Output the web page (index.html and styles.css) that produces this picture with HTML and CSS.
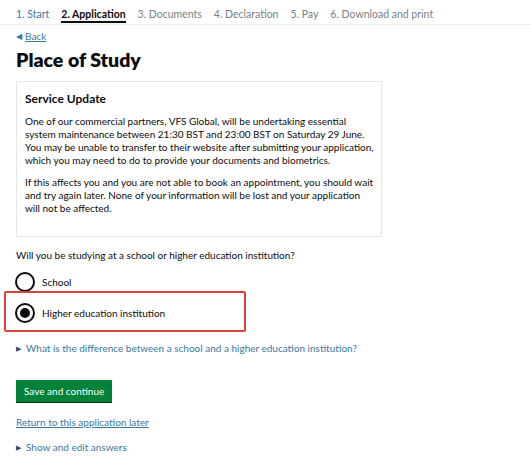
FILE: index.html
```html
<!DOCTYPE html>
<html lang="en">

<head>
    <meta charset="UTF-8">
    <meta name="viewport" content="width=device-width, initial-scale=1.0">
    <title>Place of Study</title>
    <link rel="stylesheet" href="styles.css">
</head>

<body>
    <nav class="steps">
        <ul>
            <li class="done">1. Start</li>
            <li class="current">2. Application</li>
            <li>3. Documents</li>
            <li>4. Declaration</li>
            <li>5. Pay</li>
            <li>6. Download and print</li>
        </ul>
    </nav>

    <div class="container">
        <a class="back" href="#"><span class="arrow">&#9664;</span><span class="back-text">Back</span></a>
        <h1>Place of Study</h1>

        <div class="notice">
            <h2>Service Update</h2>
            <p>One of our commercial partners, VFS Global, will be undertaking essential<br>
                system maintenance between 21:30 BST and 23:00 BST on Saturday 29 June.
                You may be unable to transfer to their website after submitting your application,
                which you may need to do to provide your documents and biometrics.</p>
            <p>If this affects you and you are not able to book an appointment, you should wait
                and try again later. None of your information will be lost and your application<br>
                will not be affected.</p>
        </div>

        <p class="question">Will you be studying at a school or higher education institution?</p>
        <div class="radios">
            <label class="radio"><span class="circle"></span>School</label>
            <label class="radio checked"><span class="circle"></span>Higher education institution</label>
        </div>

        <p class="details"><span class="tri">&#9654;</span>What is the difference between a school and a higher education institution?</p>

        <button class="save">Save and continue</button>

        <a class="later" href="#">Return to this application later</a>
        <p class="details show"><span class="tri">&#9654;</span>Show and edit answers</p>
    </div>
</body>

</html>
```

FILE: styles.css
```css
body {
    font-family: Lato, 'Noto Sans', sans-serif;
    font-size: 10px;
    margin: 0;
    padding: 0;
    background: #fff;
    color: #0b0c0c;
}

.steps {
    border-bottom: 1px solid #ececec;
    padding: 0 16px 1px;
    font-size: 10.5px;
}

.steps ul {
    list-style: none;
    margin: 0;
    padding: 0;
    display: flex;
    gap: 12px;
}

.steps li {
    color: #7a7f83;
    padding-top: 7px;
    line-height: 14px;
    border-bottom: 2px solid transparent;
}

.steps li.done {
    color: #3a77a3;
}

.steps li.current {
    color: #0b0c0c;
    font-weight: bold;
    border-bottom-color: #0b0c0c;
}

.container {
    padding: 0 16px;
}

.back {
    display: inline-flex;
    align-items: center;
    margin-top: 4px;
    color: #3a77a3;
    text-decoration: none;
    line-height: 14px;
}

.back .arrow {
    font-size: 8px;
    margin-right: 3px;
}

.back-text {
    text-decoration: underline;
}

h1 {
    font-size: 19.5px;
    font-weight: 800;
    margin: 5px 0 9px;
    line-height: 24px;
}

.notice {
    border: 1px solid #e6e6e6;
    width: 355px;
    padding: 8px 1px 21px 8px;
}

.notice h2 {
    font-size: 12px;
    font-weight: bold;
    margin: 0 0 8px;
    line-height: 17px;
}

.notice p {
    margin: 0 0 9px;
    line-height: 13px;
}

.notice p:last-child {
    margin-bottom: 0;
}

.question {
    margin: 12px 0 10px;
    line-height: 13px;
}

.radios {
    display: flex;
    flex-direction: column;
    gap: 11px;
}

.radio {
    display: flex;
    align-items: center;
    gap: 7px;
    line-height: 20px;
    position: relative;
}

.circle {
    width: 16px;
    height: 16px;
    border: 2px solid #0b0c0c;
    border-radius: 50%;
    margin-left: -1px;
    display: flex;
    align-items: center;
    justify-content: center;
}

.checked .circle::after {
    content: "";
    width: 10px;
    height: 10px;
    border-radius: 50%;
    background: #0b0c0c;
}

/* red highlight drawn over the chosen answer */
.checked::before {
    content: "";
    position: absolute;
    left: -12px;
    top: -12px;
    width: 238px;
    height: 37px;
    border: 2px solid #d9433b;
    border-radius: 2px;
}

.details {
    color: #3a77a3;
    margin: 19px 0 0;
    line-height: 13px;
}

.details .tri {
    font-size: 7px;
    margin-right: 5px;
    color: #2a4a66;
    vertical-align: 1px;
}

.details.show {
    margin-top: 12px;
}

.save {
    display: block;
    margin-top: 25px;
    background: #00823b;
    color: #fff;
    font-family: inherit;
    font-size: 10px;
    border: none;
    box-shadow: 0 1px 0 #003618;
    padding: 5px 8px;
    line-height: 12px;
    cursor: pointer;
}

.later {
    display: inline-block;
    margin-top: 14px;
    color: #3a77a3;
    line-height: 13px;
}
```
